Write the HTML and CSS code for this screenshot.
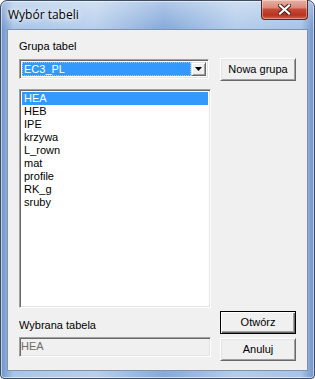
FILE: index.html
```html
<!DOCTYPE html>
<html>
  <head>
    <meta charset="utf-8">
    <title>Wybór tabeli</title>
    <link rel="stylesheet" href="styles.css">
  </head>
  <body>
    <div class="window">
      <div class="titlebar">
        <span class="title">Wybór tabeli</span>
        <div class="close">
          <svg width="13" height="11" viewBox="0 0 13 11">
            <path d="M2 1.5 L11 9.5 M11 1.5 L2 9.5" stroke="#4b1d18" stroke-width="4.2" stroke-linecap="square"/>
            <path d="M2 1.5 L11 9.5 M11 1.5 L2 9.5" stroke="#ffffff" stroke-width="2.2" stroke-linecap="square"/>
          </svg>
        </div>
      </div>
      <div class="client">
        <div class="colLeft">
          <div class="label">Grupa tabel</div>
          <div class="combo">
            <div class="comboValue"><span>EC3_PL</span></div>
            <div class="comboBtn">
              <svg width="7" height="4" viewBox="0 0 7 4"><path d="M0 0 H7 L3.5 4 Z" fill="#000"/></svg>
            </div>
          </div>
          <div class="list">
            <div class="item selected">HEA</div>
            <div class="item">HEB</div>
            <div class="item">IPE</div>
            <div class="item">krzywa</div>
            <div class="item">L_rown</div>
            <div class="item">mat</div>
            <div class="item">profile</div>
            <div class="item">RK_g</div>
            <div class="item">sruby</div>
          </div>
          <div class="label bottomLabel">Wybrana tabela</div>
          <div class="edit">HEA</div>
        </div>
        <div class="colRight">
          <div class="btn">Nowa grupa</div>
          <div class="btn default">Otwórz</div>
          <div class="btn">Anuluj</div>
        </div>
      </div>
    </div>
  </body>
</html>
```

FILE: styles.css
```css
body {
  margin: 0;
  background: #ffffff;
}

.window {
  width: 315px;
  height: 379px;
  box-sizing: border-box;
  border: 1px solid #3b4d66;
  border-radius: 7px 7px 4px 4px;
  padding: 0 6px 7px 6px;
  display: flex;
  flex-direction: column;
  background:
    linear-gradient(to bottom, rgba(255, 255, 255, 0.35), rgba(255, 255, 255, 0) 28px),
    linear-gradient(to right, #6f95cb 0, #a9c5e8 4%, #b9d0ec 30%, #86aadb 52%, #b4cdeb 75%, #a7c3e7 96%, #6f95cb 100%);
  box-shadow: inset 0 0 0 1px rgba(255, 255, 255, 0.55);
}

.titlebar {
  height: 28px;
  display: flex;
  justify-content: space-between;
  align-items: flex-start;
}

.title {
  font-family: "Open Sans", "Liberation Sans", sans-serif;
  font-size: 12px;
  line-height: 16px;
  color: #000;
  padding: 6px 0 0 1px;
  text-shadow: 0 0 8px #ffffff, 0 0 4px #ffffff;
}

.close {
  width: 47px;
  height: 20px;
  margin-top: -1px;
  box-sizing: border-box;
  border: 1px solid #5a2620;
  border-top: none;
  border-radius: 0 0 4px 4px;
  background: linear-gradient(to bottom, #e9b2a4 0, #d98a78 40%, #c44a35 50%, #b8331e 80%, #d2654c 100%);
  box-shadow: inset 0 0 0 1px rgba(255, 255, 255, 0.35);
  display: flex;
  align-items: center;
  justify-content: center;
}

.client {
  flex: 1;
  border: 1px solid #7f93ae;
  background: #f0f0f0;
  display: flex;
  padding-left: 11px;
  font-family: "Liberation Sans", Arial, sans-serif;
  font-size: 11px;
  line-height: 13px;
  color: #000;
}

.colLeft {
  width: 192px;
  display: flex;
  flex-direction: column;
  padding-top: 10px;
}

.label {
  height: 13px;
}

.bottomLabel {
  margin-top: 11px;
}

/* sunken 3D border, classic look */
.combo,
.list,
.edit {
  box-sizing: border-box;
  border-top: 1px solid #a0a0a0;
  border-left: 1px solid #a0a0a0;
  border-right: 1px solid #ffffff;
  border-bottom: 1px solid #ffffff;
  box-shadow: inset 1px 1px 0 #696969, inset -1px -1px 0 #e3e3e3;
}

.combo {
  width: 190px;
  height: 20px;
  margin-top: 6px;
  background: #ffffff;
  display: flex;
  padding: 2px;
}

.comboValue {
  flex: 1;
  background: #3399ff;
  color: #ffffff;
  line-height: 15px;
  padding-left: 2px;
  outline: 1px dotted #9ccbff;
  outline-offset: -1px;
}

.comboBtn {
  width: 15px;
  box-sizing: border-box;
  background: #f0f0f0;
  border-top: 1px solid #e3e3e3;
  border-left: 1px solid #e3e3e3;
  border-right: 1px solid #696969;
  border-bottom: 1px solid #696969;
  box-shadow: inset 1px 1px 0 #ffffff, inset -1px -1px 0 #a0a0a0;
  display: flex;
  align-items: center;
  justify-content: center;
}

.list {
  height: 219px;
  margin-top: 10px;
  background: #ffffff;
  padding: 2px;
}

.item {
  height: 13px;
  padding-left: 2px;
}

.item.selected {
  background: #3399ff;
  color: #ffffff;
}

.edit {
  height: 20px;
  margin-top: 5px;
  background: #f0f0f0;
  color: #6d6d6d;
  padding: 2px 1px;
}

.colRight {
  width: 76px;
  margin-left: 9px;
  display: flex;
  flex-direction: column;
  padding: 28px 0 9px 0;
  gap: 4px;
}

.btn {
  height: 23px;
  box-sizing: border-box;
  background: #f0f0f0;
  border-top: 1px solid #ffffff;
  border-left: 1px solid #ffffff;
  border-right: 1px solid #696969;
  border-bottom: 1px solid #696969;
  box-shadow: inset 1px 1px 0 #e3e3e3, inset -1px -1px 0 #a0a0a0;
  display: flex;
  align-items: center;
  justify-content: center;
}

.btn.default {
  margin-top: auto;
  border: 1px solid #000000;
  box-shadow: inset 1px 1px 0 #ffffff, inset -1px -1px 0 #696969, inset -2px -2px 0 #a0a0a0;
}
```
